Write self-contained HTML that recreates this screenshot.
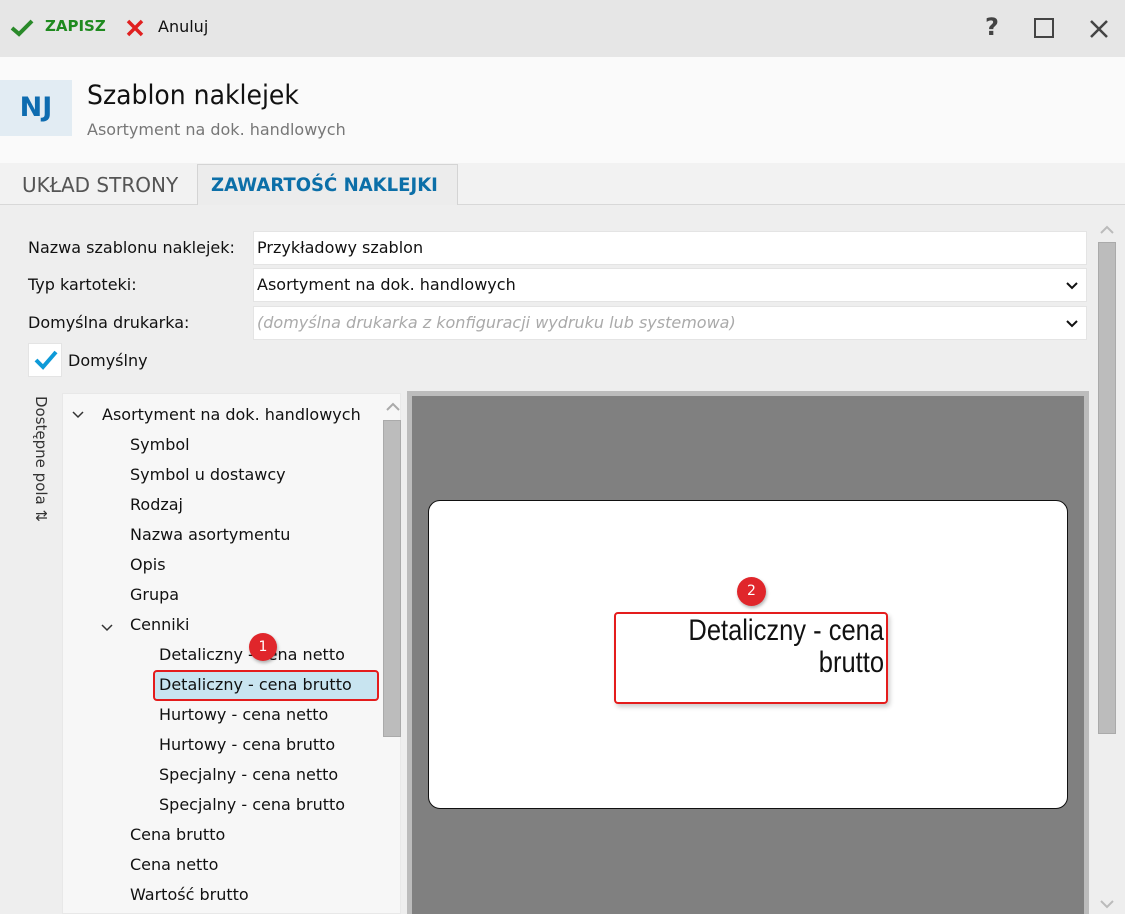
<!DOCTYPE html>
<html><head><meta charset="utf-8"><style>
*{box-sizing:border-box;margin:0;padding:0}
body{width:1125px;height:914px;overflow:hidden;background:#eeeeee;font-family:"Segoe UI","DejaVu Sans","Liberation Sans",sans-serif;color:#111;position:relative}
.a{position:absolute}
.t{font-size:16px;white-space:nowrap}
</style></head><body>
<div class="a" style="left:0;top:0;width:1125px;height:57px;background:#e6e6e6"></div>
<svg class="a" style="left:10px;top:19px" width="24" height="18" viewBox="0 0 24 18"><path d="M2 9 L9 15 L22 2" stroke="#2a8a2a" stroke-width="4" fill="none"/></svg>
<div class="a t" style="left:45px;top:17px;color:#1f8a1f;font-weight:bold;font-size:15px">ZAPISZ</div>
<svg class="a" style="left:126px;top:19px" width="18" height="18"><path d="M2 2L16 16M16 2L2 16" stroke="#e02020" stroke-width="3.5"/></svg>
<div class="a t" style="left:158px;top:17px">Anuluj</div>
<div class="a" style="left:985px;top:13px;font-size:24px;color:#444;font-weight:bold">?</div>
<div class="a" style="left:1034px;top:18px;width:20px;height:20px;border:2.5px solid #444"></div>
<svg class="a" style="left:1089px;top:19px" width="20" height="20"><path d="M2 2L18 18M18 2L2 18" stroke="#444" stroke-width="2.5"/></svg>

<div class="a" style="left:0;top:57px;width:1125px;height:106px;background:#fafafa"></div>
<div class="a" style="left:0;top:80px;width:72px;height:56px;background:#e2ecf3;color:#0e6cb0;font-size:27px;font-weight:bold;text-align:center;line-height:56px">NJ</div>
<div class="a" style="left:87px;top:80px;font-size:27px;white-space:nowrap;transform:scaleX(0.93);transform-origin:left">Szablon naklejek</div>
<div class="a t" style="left:87px;top:120px;color:#777">Asortyment na dok. handlowych</div>

<div class="a" style="left:0;top:163px;width:1125px;height:42px;background:#f2f2f2;border-bottom:1px solid #d8d8d8"></div>
<div class="a" style="left:22px;top:173px;font-size:20px;color:#555;white-space:nowrap">UKŁAD STRONY</div>
<div class="a" style="left:197px;top:164px;width:261px;height:41px;background:#ececec;border:1px solid #d4d4d4;border-bottom:none"></div>
<div class="a" style="left:211px;top:174px;font-size:19px;color:#0c6fa8;font-weight:bold;white-space:nowrap;transform:scaleX(0.95);transform-origin:left">ZAWARTOŚĆ NAKLEJKI</div>

<div class="a t" style="left:28px;top:238px">Nazwa szablonu naklejek:</div>
<div class="a t" style="left:28px;top:275px">Typ kartoteki:</div>
<div class="a t" style="left:28px;top:313px">Domyślna drukarka:</div>
<div class="a" style="left:253px;top:231px;width:834px;height:34px;background:#fff;border:1px solid #e4e4e4"></div>
<div class="a" style="left:253px;top:268px;width:834px;height:34px;background:#fff;border:1px solid #e4e4e4"></div>
<div class="a" style="left:253px;top:306px;width:834px;height:34px;background:#fff;border:1px solid #e4e4e4"></div>
<div class="a t" style="left:257px;top:238px">Przykładowy szablon</div>
<div class="a t" style="left:257px;top:275px">Asortyment na dok. handlowych</div>
<div class="a t" style="left:257px;top:313px;color:#aaa;font-style:italic">(domyślna drukarka z konfiguracji wydruku lub systemowa)</div>
<svg class="a" style="left:1066px;top:282px" width="12" height="8"><path d="M1 1L6 6L11 1" stroke="#111" stroke-width="2" fill="none"/></svg>
<svg class="a" style="left:1066px;top:320px" width="12" height="8"><path d="M1 1L6 6L11 1" stroke="#111" stroke-width="2" fill="none"/></svg>
<div class="a" style="left:28px;top:343px;width:34px;height:34px;background:#fff;border:1px solid #e4e4e4"></div>
<svg class="a" style="left:34px;top:349px" width="24" height="22"><path d="M2 11L9 18L22 3" stroke="#0e9ad8" stroke-width="4" fill="none"/></svg>
<div class="a t" style="left:68px;top:351px">Domyślny</div>

<div class="a t" style="left:32px;top:396px;writing-mode:vertical-rl;color:#333;font-size:15px">Dostępne pola ⇅</div>
<div class="a" style="left:62px;top:393px;width:339px;height:521px;background:#f7f7f7;border:1px solid #e8e8e8"></div>
<svg class="a" style="left:386px;top:402px" width="14" height="9"><path d="M1 8L7 2L13 8" stroke="#aaa" stroke-width="2" fill="none"/></svg>
<div class="a" style="left:383px;top:420px;width:18px;height:317px;background:#bcbcbc;border:1px solid #aaa"></div>
<svg class="a" style="left:72px;top:411px" width="12" height="8"><path d="M1 1L6 6L11 1" stroke="#333" stroke-width="1.5" fill="none"/></svg>
<svg class="a" style="left:101px;top:624px" width="12" height="8"><path d="M1 1L6 6L11 1" stroke="#333" stroke-width="1.5" fill="none"/></svg>
<div class="a" style="left:153px;top:670px;width:226px;height:31px;background:#c8e4f0;border:2px solid #e41c1c;border-radius:4px"></div>
<div class="a t" style="left:102px;top:405px">Asortyment na dok. handlowych</div>
<div class="a t" style="left:130px;top:435px">Symbol</div>
<div class="a t" style="left:130px;top:465px">Symbol u dostawcy</div>
<div class="a t" style="left:130px;top:495px">Rodzaj</div>
<div class="a t" style="left:130px;top:525px">Nazwa asortymentu</div>
<div class="a t" style="left:130px;top:555px">Opis</div>
<div class="a t" style="left:130px;top:585px">Grupa</div>
<div class="a t" style="left:130px;top:615px">Cenniki</div>
<div class="a t" style="left:159px;top:645px">Detaliczny - cena netto</div>
<div class="a t" style="left:159px;top:675px">Detaliczny - cena brutto</div>
<div class="a t" style="left:159px;top:705px">Hurtowy - cena netto</div>
<div class="a t" style="left:159px;top:735px">Hurtowy - cena brutto</div>
<div class="a t" style="left:159px;top:765px">Specjalny - cena netto</div>
<div class="a t" style="left:159px;top:795px">Specjalny - cena brutto</div>
<div class="a t" style="left:130px;top:825px">Cena brutto</div>
<div class="a t" style="left:130px;top:855px">Cena netto</div>
<div class="a t" style="left:130px;top:885px">Wartość brutto</div>
<div class="a" style="left:249px;top:633px;width:28px;height:28px;border-radius:50%;background:#e0262b;color:#fff;font-size:14px;text-align:center;line-height:28px;box-shadow:1px 2px 3px rgba(0,0,0,.3)">1</div>

<div class="a" style="left:407px;top:391px;width:682px;height:523px;background:#bcbcbc"></div>
<div class="a" style="left:412px;top:396px;width:672px;height:518px;background:#808080"></div>
<div class="a" style="left:428px;top:500px;width:640px;height:309px;background:#fff;border:1.5px solid #111;border-radius:12px"></div>
<div class="a" style="left:614px;top:612px;width:274px;height:92px;border:2px solid #e41c1c;border-radius:4px;box-shadow:2px 3px 5px rgba(0,0,0,.2)"></div>
<div class="a" style="left:500px;top:615px;width:384px;text-align:right;font-family:'Liberation Sans',sans-serif;font-size:30px;line-height:32px;transform:scaleX(0.85);transform-origin:right;white-space:nowrap">Detaliczny - cena<br>brutto</div>
<div class="a" style="left:737px;top:577px;width:29px;height:29px;border-radius:50%;background:#e0262b;color:#fff;font-size:14px;text-align:center;line-height:29px;box-shadow:1px 2px 3px rgba(0,0,0,.3)">2</div>

<svg class="a" style="left:1100px;top:225px" width="14" height="9"><path d="M1 8L7 2L13 8" stroke="#bbb" stroke-width="2" fill="none"/></svg>
<div class="a" style="left:1098px;top:242px;width:18px;height:492px;background:#bcbcbc;border:1px solid #aaa"></div>
<svg class="a" style="left:1100px;top:900px" width="14" height="9"><path d="M1 1L7 7L13 1" stroke="#bbb" stroke-width="2" fill="none"/></svg>
</body></html>
